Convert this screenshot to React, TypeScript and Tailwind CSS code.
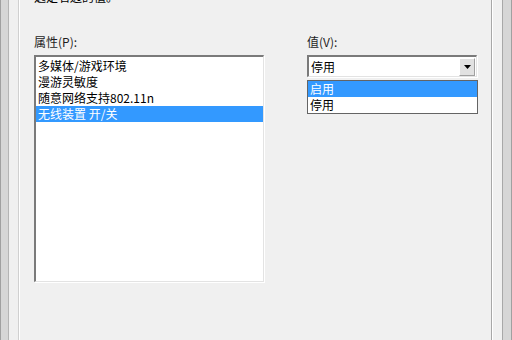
const FONT = '"Noto Sans CJK SC", "Microsoft YaHei", sans-serif';

const PROPS = ['多媒体/游戏环境', '漫游灵敏度', '随意网络支持802.11n', '无线装置 开/关'];

export default function App() {
  const selected = 3;

  return (
    <div className="w-[512px] h-[340px] flex bg-[#f0f0f0] overflow-hidden text-[12px] text-black" style={{ fontFamily: FONT }}>
      {/* left frame */}
      <div className="w-px h-full bg-[#a0a0a0]" />
      <div className="w-[7px] h-full bg-[#d6d6d6]" />
      <div className="w-px h-full bg-[#b4b4b4]" />
      <div className="w-[9px] h-full bg-[#f0f0f0]" />
      <div className="w-px h-full bg-[#d0d0d0]" />
      <div className="w-px h-full bg-white" />

      {/* page */}
      <div className="flex-1 h-full flex flex-col pl-[14px]">
        <div className="h-[16px] leading-[16px] -mt-[11px]">选定右边的值。</div>

        <div className="flex mt-[29px]">
          {/* properties */}
          <div className="w-[230px] flex flex-col">
            <div className="h-[16px] leading-[16px] text-[#1e1e1e]">属性(P):</div>
            <div className="mt-[5px] h-[227px] border-t-2 border-l-2 border-t-[#7a7a7a] border-l-[#7a7a7a] border-r border-b border-r-[#e3e3e3] border-b-[#e3e3e3] bg-white shadow-[1px_1px_0_#ffffff]">
              <div className="pt-px">
                {PROPS.map((p, i) => (
                  <div key={p}
                    className={i === selected
                      ? 'h-[16px] leading-[16px] pl-[2px] bg-[#3399ff] text-white whitespace-nowrap'
                      : 'h-[16px] leading-[16px] pl-[2px] whitespace-nowrap'}>
                    {p}
                  </div>
                ))}
              </div>
            </div>
          </div>

          {/* value */}
          <div className="ml-[43px] w-[171px] flex flex-col">
            <div className="h-[16px] leading-[16px] text-[#1e1e1e]">值(V):</div>
            <div className="relative mt-[5px]">
              <div className="h-[22px] w-[170px] flex items-center border-t-2 border-l-2 border-t-[#7a7a7a] border-l-[#7a7a7a] border-r border-b border-r-[#e3e3e3] border-b-[#e3e3e3] bg-white shadow-[1px_1px_0_#ffffff]">
                <div className="flex-1 pl-[2px] leading-[16px]">停用</div>
                <div className="w-[16px] h-[18px] mr-px flex items-center justify-center bg-[#e1e1e1] border-t border-l border-t-white border-l-white border-r border-b border-r-[#a0a0a0] border-b-[#a0a0a0]">
                  <svg width="7" height="4" viewBox="0 0 7 4">
                    <path d="M0 0 H7 L3.5 4 Z" fill="#000" />
                  </svg>
                </div>
              </div>
              <div className="mt-[3px] w-[171px] border border-[#646464] bg-white">
                <div className="h-[16px] leading-[16px] pl-[2px] bg-[#3399ff] text-white">启用</div>
                <div className="h-[16px] leading-[16px] pl-[2px]">停用</div>
              </div>
            </div>
          </div>
        </div>
      </div>

      {/* right frame */}
      <div className="w-px h-full bg-[#a8a8a8]" />
      <div className="w-px h-full bg-white" />
      <div className="w-[9px] h-full bg-[#f0f0f0]" />
      <div className="w-px h-full bg-[#a8a8a8]" />
      <div className="w-[8px] h-full bg-[#d6d6d6]" />
      <div className="w-px h-full bg-[#a0a0a0]" />
    </div>
  );
}
